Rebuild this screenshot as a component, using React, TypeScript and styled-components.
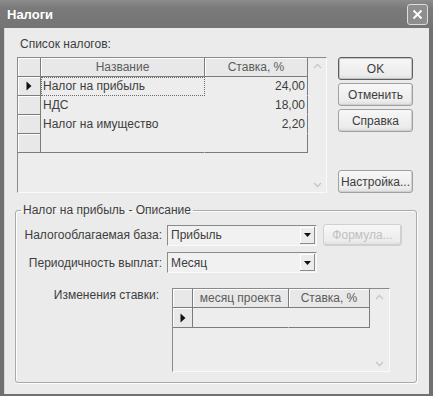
import styled, { createGlobalStyle } from "styled-components";

const GlobalStyle = createGlobalStyle`
  html, body {
    margin: 0;
    padding: 0;
  }
  body {
    width: 433px;
    height: 396px;
    overflow: hidden;
    background: #6e6e6e;
    font-family: "Liberation Sans", Arial, sans-serif;
    font-size: 12px;
    color: #3d3d3d;
  }
`;

const Window = styled.div`
  width: 433px;
  height: 396px;
  box-sizing: border-box;
  display: flex;
  flex-direction: column;
  background: #707070;
`;

const TitleBar = styled.div`
  height: 28px;
  flex: none;
  display: flex;
  align-items: center;
  justify-content: space-between;
  padding: 0 5px 0 7px;
  background: linear-gradient(#8c8c8c, #7a7a7a 30%, #747474);
`;

const Title = styled.span`
  color: #fff;
  font-weight: bold;
  font-size: 13px;
`;

const CloseBtn = styled.div`
  width: 19px;
  height: 19px;
  border: 1px solid #dcdcdc;
  border-radius: 3px;
  background: #8e8e8e;
  display: flex;
  align-items: center;
  justify-content: center;
`;

const Client = styled.div`
  flex: 1;
  margin: 0 4px 4px 4px;
  background: #ebebeb;
  display: flex;
  flex-direction: column;
  box-shadow: inset 1px 0 #d8d8d8;
`;

const TopSection = styled.div`
  display: flex;
  padding: 9px 0 0 13px;
`;

const LeftCol = styled.div`
  display: flex;
  flex-direction: column;
`;

const Caption = styled.div`
  height: 14px;
  line-height: 14px;
  margin: 0 0 6px 3px;
`;

const ButtonCol = styled.div`
  width: 75px;
  margin-left: 11px;
  padding-top: 20px;
  display: flex;
  flex-direction: column;
  gap: 3px;
`;

const Button = styled.button<{ $default?: boolean; $disabled?: boolean }>`
  height: 23px;
  padding: 0;
  font-family: inherit;
  font-size: 12px;
  font-weight: normal;
  color: ${(p) => (p.$disabled ? "#c0c0c0" : "#3d3d3d")};
  border: 1px solid ${(p) => (p.$default ? "#5e5e5e" : p.$disabled ? "#d0d0d0" : "#a0a0a0")};
  border-radius: 3px;
  background: linear-gradient(#f7f7f7, #ececec 80%, #dedede);
  box-shadow: ${(p) => (p.$default ? "inset 0 0 0 1px #c4c4c4" : "inset -1px -1px #d0d0d0")};
  &:last-child {
    margin-top: auto;
  }
`;

const Grid = styled.div<{ $w: number; $h: number }>`
  width: ${(p) => p.$w}px;
  height: ${(p) => p.$h}px;
  box-sizing: border-box;
  border-top: 1px solid #8a8a8a;
  border-left: 1px solid #8a8a8a;
  border-right: 1px solid #fafafa;
  border-bottom: 1px solid #fafafa;
  display: flex;
  background: #ededed;
`;

const Rows = styled.div`
  display: flex;
  flex-direction: column;
  align-self: flex-start;
`;

const Row = styled.div<{ $cols: string; $h: number }>`
  display: grid;
  grid-template-columns: ${(p) => p.$cols};
  height: ${(p) => p.$h}px;
`;

const Fixed = styled.div`
  box-sizing: border-box;
  border-right: 1px solid #7c7c7c;
  border-bottom: 1px solid #7c7c7c;
  box-shadow: inset 1px 1px #ffffff;
  background: #e8e8e8;
  display: flex;
  align-items: center;
  justify-content: center;
  color: #5c5c5c;
  white-space: nowrap;
`;

const Cell = styled.div<{ $right?: boolean; $focus?: boolean; $edgeR?: boolean; $edgeB?: boolean }>`
  box-sizing: border-box;
  border-right: 1px solid ${(p) => (p.$edgeR ? "#7c7c7c" : "transparent")};
  border-bottom: 1px solid ${(p) => (p.$edgeB ? "#7c7c7c" : "transparent")};
  display: flex;
  align-items: center;
  justify-content: ${(p) => (p.$right ? "flex-end" : "flex-start")};
  padding: 0 2px;
  white-space: nowrap;
  outline: ${(p) => (p.$focus ? "1px dotted #6a6a6a" : "none")};
  outline-offset: -1px;
`;

const ScrollCol = styled.div`
  flex: 1;
  display: flex;
  flex-direction: column;
  justify-content: space-between;
  align-items: center;
  padding: 5px 0 4px;
`;

const GroupBox = styled.fieldset`
  margin: 10px 12px 11px 11px;
  padding: 7px 0 10px 0;
  border: 1px solid #a9a9a9;
  border-radius: 3px;
  box-shadow: inset 1px 1px #fdfdfd, 1px 1px #fdfdfd;
  display: flex;
  flex-direction: column;
  gap: 6px;
`;

const Legend = styled.legend`
  margin-left: 5px;
  padding: 0 2px;
  line-height: 14px;
`;

const FormRow = styled.div<{ $top?: number }>`
  display: grid;
  grid-template-columns: 146px 150px 80px;
  column-gap: 5px;
  align-items: center;
  margin-top: ${(p) => p.$top ?? 0}px;
`;

const Label = styled.div<{ $top?: boolean }>`
  text-align: right;
  align-self: ${(p) => (p.$top ? "start" : "center")};
  line-height: 14px;
  padding-right: ${(p) => (p.$top ? 3 : 0)}px;
`;

const Combo = styled.div`
  height: 21px;
  box-sizing: border-box;
  border-top: 1px solid #8a8a8a;
  border-left: 1px solid #8a8a8a;
  border-right: 1px solid #fafafa;
  border-bottom: 1px solid #fafafa;
  background: #f1f1f1;
  display: flex;
  align-items: center;
  padding: 0 1px 0 3px;
`;

const ComboText = styled.span`
  flex: 1;
`;

const DropBtn = styled.div`
  width: 15px;
  height: 17px;
  background: #ececec;
  box-shadow: inset -1px -1px #8c8c8c, inset 1px 1px #fff;
  display: flex;
  align-items: center;
  justify-content: center;
`;

const FormulaBtn = styled(Button)`
  height: 22px;
  margin-left: 1px;
  &:last-child {
    margin-top: 0;
  }
`;

const GridWrap = styled.div`
  grid-column: 2 / span 2;
  margin-left: 5px;
`;

const Arrow = () => (
  <svg width="6" height="10" viewBox="0 0 6 10">
    <polygon points="0.5,0.5 5.5,5 0.5,9.5" fill="#111" />
  </svg>
);

const Chevron = ({ up }: { up?: boolean }) => (
  <svg width="9" height="6" viewBox="0 0 9 6">
    <polyline
      points={up ? "1,5 4.5,1.5 8,5" : "1,1 4.5,4.5 8,1"}
      fill="none"
      stroke="#c6c6c6"
      strokeWidth="1.3"
    />
  </svg>
);

const DropArrow = () => (
  <svg width="7" height="4" viewBox="0 0 7 4">
    <polygon points="0,0 7,0 3.5,4" fill="#111" />
  </svg>
);

const taxes = [
  { name: "Налог на прибыль", rate: "24,00" },
  { name: "НДС", rate: "18,00" },
  { name: "Налог на имущество", rate: "2,20" },
  { name: "", rate: "" },
];

const cols1 = "23px 164px 103px";
const cols2 = "20px 96px 81px";

export default function App() {
  return (
    <>
      <GlobalStyle />
      <Window>
        <TitleBar>
          <Title>Налоги</Title>
          <CloseBtn>
            <svg width="11" height="11" viewBox="0 0 11 11">
              <path d="M1.5 1.5 L9.5 9.5 M9.5 1.5 L1.5 9.5" stroke="#fff" strokeWidth="2" />
            </svg>
          </CloseBtn>
        </TitleBar>
        <Client>
          <TopSection>
            <LeftCol>
              <Caption>Список налогов:</Caption>
              <Grid $w={310} $h={136}>
                <Rows>
                  <Row $cols={cols1} $h={19}>
                    <Fixed />
                    <Fixed>Название</Fixed>
                    <Fixed>Ставка, %</Fixed>
                  </Row>
                  {taxes.map((t, i) => (
                    <Row key={i} $cols={cols1} $h={19}>
                      <Fixed>{i === 0 && <Arrow />}</Fixed>
                      <Cell $focus={i === 0} $edgeB={i === taxes.length - 1}>
                        {t.name}
                      </Cell>
                      <Cell $right $edgeR $edgeB={i === taxes.length - 1}>
                        {t.rate}
                      </Cell>
                    </Row>
                  ))}
                </Rows>
                <ScrollCol>
                  <Chevron up />
                  <Chevron />
                </ScrollCol>
              </Grid>
            </LeftCol>
            <ButtonCol>
              <Button $default>OK</Button>
              <Button>Отменить</Button>
              <Button>Справка</Button>
              <Button>Настройка...</Button>
            </ButtonCol>
          </TopSection>
          <GroupBox>
            <Legend>Налог на прибыль - Описание</Legend>
            <FormRow>
              <Label>Налогооблагаемая база:</Label>
              <Combo>
                <ComboText>Прибыль</ComboText>
                <DropBtn>
                  <DropArrow />
                </DropBtn>
              </Combo>
              <FormulaBtn $disabled>Формула...</FormulaBtn>
            </FormRow>
            <FormRow>
              <Label>Периодичность выплат:</Label>
              <Combo>
                <ComboText>Месяц</ComboText>
                <DropBtn>
                  <DropArrow />
                </DropBtn>
              </Combo>
            </FormRow>
            <FormRow $top={9}>
              <Label $top>Изменения ставки:</Label>
              <GridWrap>
                <Grid $w={218} $h={84}>
                  <Rows>
                    <Row $cols={cols2} $h={19}>
                      <Fixed />
                      <Fixed>месяц проекта</Fixed>
                      <Fixed>Ставка, %</Fixed>
                    </Row>
                    <Row $cols={cols2} $h={20}>
                      <Fixed>
                        <Arrow />
                      </Fixed>
                      <Cell $edgeB />
                      <Cell $edgeR $edgeB />
                    </Row>
                  </Rows>
                  <ScrollCol>
                    <Chevron up />
                    <Chevron />
                  </ScrollCol>
                </Grid>
              </GridWrap>
            </FormRow>
          </GroupBox>
        </Client>
      </Window>
    </>
  );
}
